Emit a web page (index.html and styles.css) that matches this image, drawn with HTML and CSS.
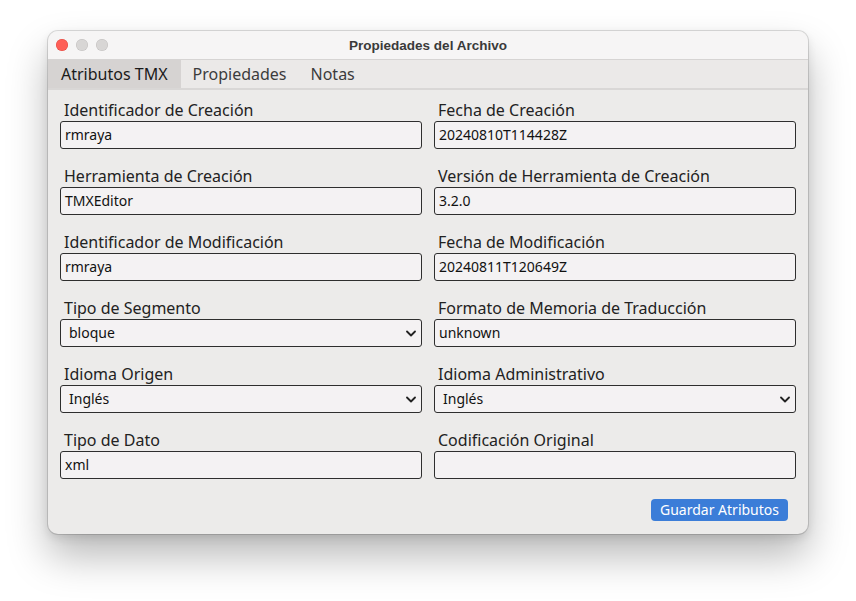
FILE: index.html
```html
<!DOCTYPE html>
<html lang="es">
<head>
<meta charset="utf-8">
<title>Propiedades del Archivo</title>
<link rel="stylesheet" href="styles.css">
</head>
<body>
<div class="window">
  <div class="titlebar">
    <div class="lights">
      <span class="light red"></span>
      <span class="light"></span>
      <span class="light"></span>
    </div>
    <div class="title">Propiedades del Archivo</div>
  </div>
  <div class="tabs">
    <div class="tab active">Atributos TMX</div>
    <div class="tab">Propiedades</div>
    <div class="tab">Notas</div>
  </div>
  <div class="content">
    <div class="grid">
      <div class="field"><label>Identificador de Creación</label><div class="input">rmraya</div></div>
      <div class="field"><label>Fecha de Creación</label><div class="input">20240810T114428Z</div></div>
      <div class="field"><label>Herramienta de Creación</label><div class="input">TMXEditor</div></div>
      <div class="field"><label>Versión de Herramienta de Creación</label><div class="input">3.2.0</div></div>
      <div class="field"><label>Identificador de Modificación</label><div class="input">rmraya</div></div>
      <div class="field"><label>Fecha de Modificación</label><div class="input">20240811T120649Z</div></div>
      <div class="field"><label>Tipo de Segmento</label><div class="input select"><span>bloque</span><svg class="chev" width="10" height="7" viewBox="0 0 10 7"><path d="M1 1.5 L5 5.5 L9 1.5" fill="none" stroke="#222" stroke-width="1.8" stroke-linecap="round" stroke-linejoin="round"/></svg></div></div>
      <div class="field"><label>Formato de Memoria de Traducción</label><div class="input">unknown</div></div>
      <div class="field"><label>Idioma Origen</label><div class="input select"><span>Inglés</span><svg class="chev" width="10" height="7" viewBox="0 0 10 7"><path d="M1 1.5 L5 5.5 L9 1.5" fill="none" stroke="#222" stroke-width="1.8" stroke-linecap="round" stroke-linejoin="round"/></svg></div></div>
      <div class="field"><label>Idioma Administrativo</label><div class="input select"><span>Inglés</span><svg class="chev" width="10" height="7" viewBox="0 0 10 7"><path d="M1 1.5 L5 5.5 L9 1.5" fill="none" stroke="#222" stroke-width="1.8" stroke-linecap="round" stroke-linejoin="round"/></svg></div></div>
      <div class="field"><label>Tipo de Dato</label><div class="input">xml</div></div>
      <div class="field"><label>Codificación Original</label><div class="input"></div></div>
    </div>
    <div class="actions">
      <button class="btn">Guardar Atributos</button>
    </div>
  </div>
</div>
</body>
</html>
```

FILE: styles.css
```css
* { box-sizing: border-box; }
html, body { margin: 0; padding: 0; background: #ffffff; }
html { min-height: 100%; }
body {
  min-height: 601px;
  padding: 31px 48px 0 48px;
  font-family: "Noto Sans", "Open Sans", sans-serif;
  color: #222;
}
.window {
  width: 760px;
  height: 503px;
  background: #ecebea;
  border-radius: 10px;
  overflow: hidden;
  box-shadow: 0 0 0 1px rgba(0,0,0,0.13), 0 22px 40px rgba(0,0,0,0.28), 0 4px 10px rgba(0,0,0,0.1);
  display: flex;
  flex-direction: column;
}
.titlebar {
  height: 29px;
  background: #f6f5f5;
  border-bottom: 1px solid #d6d4d3;
  position: relative;
  display: flex;
  align-items: center;
  justify-content: center;
}
.lights {
  position: absolute;
  left: 8px;
  top: 8px;
  display: flex;
  gap: 8px;
}
.light {
  width: 12px;
  height: 12px;
  border-radius: 50%;
  background: #d8d6d5;
  box-shadow: inset 0 0 0 0.5px rgba(0,0,0,0.12);
}
.light.red { background: #fe5f57; box-shadow: inset 0 0 0 0.5px rgba(200,40,30,0.5); }
.title {
  font-family: "Liberation Sans", Arial, sans-serif;
  font-weight: bold;
  font-size: 13.5px;
  color: #3a3a3a;
}
.tabs {
  display: flex;
  height: 30px;
  background: #ebe9e8;
  border-bottom: 2px solid #d9d7d6;
}
.tab {
  padding: 0 12px;
  font-size: 16px;
  line-height: 28px;
  color: #3c3c3c;
}
.tab.active {
  background: #d6d3d2;
  color: #1a1a1a;
  padding: 0 13px;
}
.content {
  padding: 9px 12px 0 12px;
  flex: 1;
  display: flex;
  flex-direction: column;
}
.grid {
  display: grid;
  grid-template-columns: 362px 362px;
  column-gap: 12px;
  row-gap: 16px;
}
.field { display: flex; flex-direction: column; }
.field label {
  font-size: 16px;
  line-height: 22px;
  padding-left: 4px;
  color: #222;
}
.input {
  height: 28px;
  border: 1px solid #2e2e2e;
  border-radius: 3px;
  background: #f4f2f3;
  font-size: 14px;
  line-height: 26px;
  padding: 0 4px;
  color: #111;
}
.select {
  display: flex;
  justify-content: space-between;
  align-items: center;
  padding: 0 5px 0 8px;
}
.select span { line-height: 26px; }
.actions {
  display: flex;
  justify-content: flex-end;
  padding: 20px 8px 0 0;
}
.btn {
  font-family: "Noto Sans", "Open Sans", sans-serif;
  background: #3b7dd8;
  color: #fff;
  border: none;
  border-radius: 4px;
  font-size: 14px;
  height: 22px;
  padding: 0 9px;
  line-height: 22px;
}
```
